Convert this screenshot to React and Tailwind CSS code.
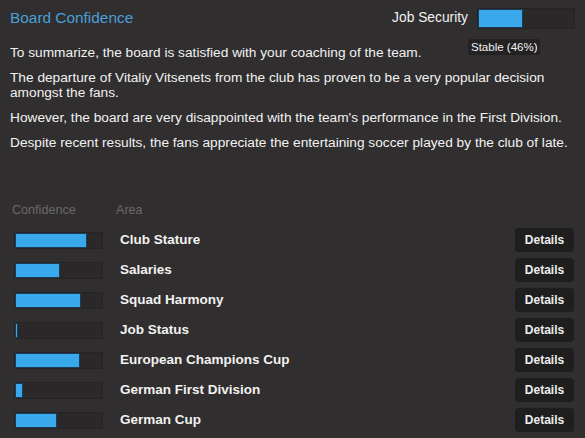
import React from "react";

const areas = [
  { name: "Club Stature", value: 83 },
  { name: "Salaries", value: 52 },
  { name: "Squad Harmony", value: 76 },
  { name: "Job Status", value: 4 },
  { name: "European Champions Cup", value: 75 },
  { name: "German First Division", value: 9 },
  { name: "German Cup", value: 48 },
];

const paragraphs = [
  "To summarize, the board is satisfied with your coaching of the team.",
  "The departure of Vitaliy Vitsenets from the club has proven to be a very popular decision amongst the fans.",
  "However, the board are very disappointed with the team's performance in the First Division.",
  "Despite recent results, the fans appreciate the entertaining soccer played by the club of late.",
];

const Bar = ({ value, className }) => (
  <div className={`bg-[#2a2828] border border-[#252323] ${className}`}>
    <div
      className="h-full bg-[#3aa9ec] border border-[#1b3d55]"
      style={{ width: `${value}%` }}
    />
  </div>
);

const App = () => {
  return (
    <div className="w-[585px] h-[438px] bg-[#302e2e] text-[#f2f2f2] font-['Liberation_Sans',Arial,sans-serif] overflow-hidden relative">
      <div className="flex items-center justify-between pl-[10px] pr-[10px] pt-[8px] h-[28px]">
        <h1 className="text-[15.4px] text-[#4a9fd8] leading-[20px]">
          Board Confidence
        </h1>
        <div className="flex items-center gap-[9px]">
          <span className="text-[13.8px]">Job Security</span>
          <Bar value={47} className="w-[98px] h-[21px]" />
        </div>
      </div>

      <div className="absolute left-[468px] top-[39px] bg-[#232121] rounded-[3px] px-[3px] py-[1px] text-[11.5px] leading-[14px]">
        Stable (46%)
      </div>

      <div className="mt-[17px] pl-[10px] pr-[4px] space-y-[10px] text-[13.7px] leading-[15px]">
        {paragraphs.map((p) => (
          <p key={p}>{p}</p>
        ))}
      </div>

      <div className="mt-[52px] flex items-center h-[16px] text-[12.6px] text-[#6b6868]">
        <span className="pl-[12px] w-[116px]">Confidence</span>
        <span>Area</span>
      </div>

      <div className="mt-[7px]">
        {areas.map((a) => (
          <div key={a.name} className="flex items-center h-[30px] pl-[14px] pr-[11px]">
            <Bar value={a.value} className="w-[89px] h-[17px]" />
            <span className="ml-[17px] flex-1 text-[13.5px] font-bold">{a.name}</span>
            <button className="w-[59px] h-[24px] rounded-[4px] bg-[#1f1e1e] text-[12px] font-bold text-[#ececec]">
              Details
            </button>
          </div>
        ))}
      </div>
    </div>
  );
};

export default App;
